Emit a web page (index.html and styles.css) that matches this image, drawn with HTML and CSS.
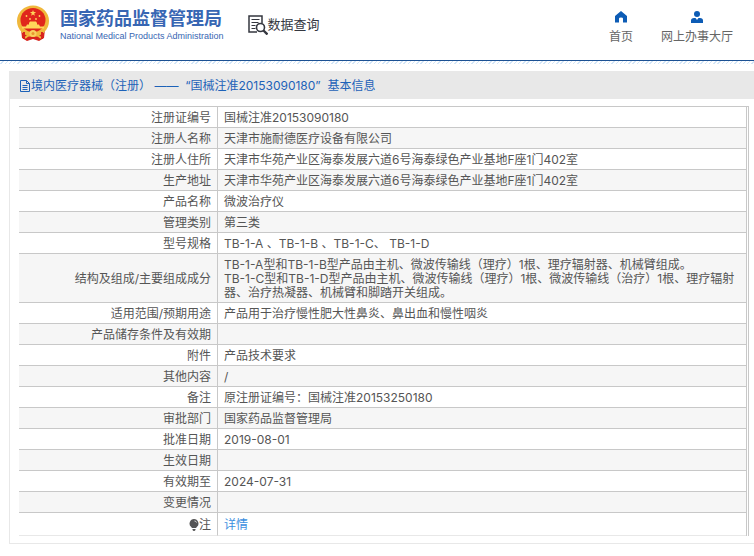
FILE: index.html
```html
<!DOCTYPE html>
<html lang="zh-CN">
<head>
    <meta charset="UTF-8">
    <meta name="viewport" content="width=device-width, initial-scale=1.0">
    <title>国家药品监督管理局 数据查询</title>
    <link rel="stylesheet" href="styles.css">
</head>
<body>
    <header class="header">
        <div class="brand">
            <svg class="emblem" viewBox="0 0 34 36" aria-hidden="true">
                <path fill="#d8231d" d="M5 24h24l-1 9-5 3-6-2-6 2-5-3z"/>
                <ellipse cx="17" cy="16" rx="16" ry="15.5" fill="#f0b83c"/>
                <ellipse cx="17" cy="15" rx="12.5" ry="12" fill="#e0261c"/>
                <path fill="#ffd65a" d="M17 5l.8 2.1h2.3l-1.9 1.4.7 2.2-1.9-1.3-1.9 1.3.7-2.2-1.9-1.4h2.3z"/>
                <g fill="#ffd65a">
                    <circle cx="10.500" cy="11" r=".9"/><circle cx="14" cy="14" r=".9"/>
                    <circle cx="20" cy="14" r=".9"/><circle cx="23.500" cy="11" r=".9"/>
                    <path d="M13 18l1-1.500h6l1 1.500v1.500h2l1 2h4v2H6v-2h4l1-2h2z"/>
                </g>
                <path fill="none" stroke="#f0b83c" stroke-width="2" d="M6 26q5 5 11 2 6 3 11-2M9 33q4-4 8-2 4-2 8 2"/>
                <circle cx="17" cy="28.500" r="3.500" fill="#f8cf60"/>
                <circle cx="17" cy="28.500" r="1.500" fill="#e8962e"/>
                <path stroke="#d8231d" stroke-width="2" d="M8 27v7M26 27v7"/>
            </svg>
            <div class="brand-text">
                <h1 class="brand-name">国家药品监督管理局</h1>
                <p class="brand-en">National Medical Products Administration</p>
            </div>
        </div>
        <div class="search-title">
            <svg class="search-icon" viewBox="0 0 20 20" fill="none" stroke="#34373f" aria-hidden="true">
                <path stroke-width="1.500" d="M14 8V1H1v16h8"/>
                <path stroke-width="1.200" d="M3.500 4.500h8M3.500 7.500h7M3.500 10.500h4M3.500 13.500h4"/>
                <circle cx="12.500" cy="12.500" r="4" stroke-width="1.600"/>
                <path stroke-width="2.400" d="M15.500 15.500l4 4"/>
            </svg>
            <span>数据查询</span>
        </div>
        <nav class="nav">
            <a href="#" class="nav-link">
                <svg class="nav-icon" viewBox="0 0 12 12" aria-hidden="true"><path fill="#0d5cb5" d="M6 0l6 5v6.500H8V7.500q0-1-2-1t-2 1v4H0V5z"/></svg>
                首页
            </a>
            <a href="#" class="nav-link">
                <svg class="nav-icon" viewBox="0 0 12 12" aria-hidden="true"><circle cx="6" cy="3" r="3" fill="#0d5cb5"/><path fill="#0d5cb5" d="M0 12V9.500Q0 7 3 7h1.500L6 9l1.500-2H9q3 0 3 2.500V12z"/></svg>
                网上办事大厅
            </a>
        </nav>
    </header>

    <main class="panel">
        <h2 class="panel-title">
            <svg class="doc-icon" viewBox="0 0 10 12" fill="none" stroke="#1d62b8" aria-hidden="true"><path d="M.5.5h6l3 3v8h-9zM6.500.5v3h3M2.500 5.500h5M2.500 7.500h5M2.500 9.500h5"/></svg>
            <span>境内医疗器械（注册） ——&nbsp; “国械注准20153090180”&nbsp; 基本信息</span>
        </h2>
        <table class="info">
            <tbody>
                <tr><th scope="row">注册证编号</th><td>国械注准20153090180</td></tr>
                <tr><th scope="row">注册人名称</th><td>天津市施耐德医疗设备有限公司</td></tr>
                <tr><th scope="row">注册人住所</th><td>天津市华苑产业区海泰发展六道6号海泰绿色产业基地F座1门402室</td></tr>
                <tr><th scope="row">生产地址</th><td>天津市华苑产业区海泰发展六道6号海泰绿色产业基地F座1门402室</td></tr>
                <tr><th scope="row">产品名称</th><td>微波治疗仪</td></tr>
                <tr><th scope="row">管理类别</th><td>第三类</td></tr>
                <tr><th scope="row">型号规格</th><td>TB-1-A 、TB-1-B 、TB-1-C、 TB-1-D</td></tr>
                <tr><th scope="row">结构及组成/主要组成成分</th><td>TB-1-A型和TB-1-B型产品由主机、微波传输线（理疗）1根、理疗辐射器、机械臂组成。<br>TB-1-C型和TB-1-D型产品由主机、微波传输线（理疗）1根、微波传输线（治疗）1根、理疗辐射器、治疗热凝器、机械臂和脚踏开关组成。</td></tr>
                <tr><th scope="row">适用范围/预期用途</th><td>产品用于治疗慢性肥大性鼻炎、鼻出血和慢性咽炎</td></tr>
                <tr><th scope="row">产品储存条件及有效期</th><td></td></tr>
                <tr><th scope="row">附件</th><td>产品技术要求</td></tr>
                <tr><th scope="row">其他内容</th><td>/</td></tr>
                <tr><th scope="row">备注</th><td>原注册证编号：国械注准20153250180</td></tr>
                <tr><th scope="row">审批部门</th><td>国家药品监督管理局</td></tr>
                <tr><th scope="row">批准日期</th><td>2019-08-01</td></tr>
                <tr><th scope="row">生效日期</th><td></td></tr>
                <tr><th scope="row">有效期至</th><td>2024-07-31</td></tr>
                <tr><th scope="row">变更情况</th><td></td></tr>
                <tr class="note">
                    <th scope="row"><svg class="bulb" viewBox="0 0 10 12" aria-hidden="true"><path fill="#555" d="M5 0a4.500 4.500 0 0 1 3 7.800L7 9H3L2 7.800A4.500 4.500 0 0 1 5 0zM3.500 10h3v1l-1 1h-1l-1-1z"/><path fill="none" stroke="#ddd" d="M5.500 2q1.500 0 2 1.500"/></svg>注</th>
                    <td><a href="#" class="detail-link">详情</a></td>
                </tr>
            </tbody>
        </table>
    </main>
</body>
</html>
```
FILE: styles.css
```css
:root {
    --blue: #1d62b8;
    --brand-blue: #3766b3;
    --text: #555;
    --line: #c8c8c8;
    --light-line: #e8e8e8;
}
* { box-sizing: border-box; }
body { margin: 0; background: #fff; color: var(--text); font: 12px/14px Inter, "Noto Sans CJK SC", sans-serif; }
h1, h2, p { margin: 0; }
a { text-decoration: none; }
svg { display: block; flex: none; }

.header { display: flex; align-items: flex-start; height: 61px; padding: 5px 21px 0 16px; border-bottom: 1px solid #1c5193; }
.brand { display: flex; gap: 10px; }
.emblem { width: 34px; height: 36px; }
.brand-text { padding-top: 4px; color: var(--brand-blue); white-space: nowrap; }
.brand-name { font-size: 18px; line-height: 20px; font-weight: bold; }
.brand-en { font-family: "Liberation Sans", sans-serif; font-size: 9px; line-height: 14px; }
.search-title { display: flex; align-items: flex-start; margin-left: 24px; padding-top: 10px; color: #34373f; font-size: 13px; line-height: 18px; white-space: nowrap; }
.search-icon { width: 20px; height: 20px; }
.nav { display: flex; gap: 28px; margin-left: auto; padding-top: 6px; }
.nav-link { display: flex; flex-direction: column; align-items: center; gap: 7px; color: #666; white-space: nowrap; }
.nav-icon { width: 12px; height: 12px; }

/* hatched strip under the header line */
.header::after { content: ""; position: absolute; top: 61px; left: 0; right: 0; height: 3px; background: repeating-linear-gradient(135deg, #fff 0 2px, #d3e6f8 2px 3px); }

.panel { margin: 10px 0 0 9px; padding-bottom: 7px; border-left: 1px solid var(--light-line); border-bottom: 1px solid var(--light-line); }
.panel-title { display: flex; align-items: center; gap: 1px; height: 28px; padding: 2px 0 0 10px; background: #e8e8e8; color: var(--blue); font-size: 12px; font-weight: normal; }
.doc-icon { width: 10px; height: 12px; }

.info { width: calc(100% - 14px); margin: 7px 5px 0 9px; border-spacing: 0; border-top: 1px solid var(--line); border-right: 3px double var(--line); }
.info th, .info td { height: 21px; padding: 4px 6px 2px; border-bottom: 1px solid var(--line); vertical-align: middle; }
.info th { width: 199px; border-right: 1px solid var(--line); font-weight: normal; text-align: right; }
.info tr:nth-child(even) { background: #f6f6f6; }
.info .note th, .info .note td { height: 23px; border-bottom-color: var(--light-line); }
.bulb { display: inline-block; width: 10px; height: 12px; vertical-align: -2px; }
.detail-link { color: #3c8fe0; }
```
